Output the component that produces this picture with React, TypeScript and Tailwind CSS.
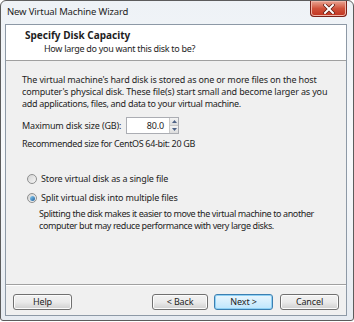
import React from 'react'

const font = { fontFamily: '"Noto Sans", "Open Sans", sans-serif' }

function WinButton({ label, primary }: { label: string; primary?: boolean }) {
  return (
    <div
      className={
        'h-[16px] rounded-[3px] border flex items-center justify-center text-[9px] text-[#1e1e1e] ' +
        (primary
          ? 'border-[#3c7fb1] bg-gradient-to-b from-[#eaf6fd] to-[#bee6fd] shadow-[inset_0_0_0_1px_#8fd1f5]'
          : 'border-[#707070] bg-gradient-to-b from-[#f2f2f2] via-[#ebebeb] to-[#cfcfcf] shadow-[inset_0_0_0_1px_#fcfcfc]')
      }
    >
      {label}
    </div>
  )
}

function Radio({ checked, label }: { checked?: boolean; label: string }) {
  return (
    <div className="flex items-center gap-[4px] h-[12px]">
      <div className="w-[10px] h-[10px] rounded-full border border-[#8e8f8f] bg-gradient-to-br from-[#d4d4d4] to-[#f6f6f6] flex items-center justify-center">
        {checked && (
          <div className="w-[5px] h-[5px] rounded-full bg-gradient-to-br from-[#8ed1f5] to-[#1b5e9c]" />
        )}
      </div>
      <span>{label}</span>
    </div>
  )
}

export default function App() {
  return (
    <div className="w-[354px] h-[322px] bg-white whitespace-nowrap" style={font}>
      <div className="w-[354px] h-[321px] rounded-t-[6px] rounded-b-[3px] border border-[#5c5c5c] bg-gradient-to-b from-[#eef2f6] via-[#f7f9fb] to-[#e6ebf1] flex flex-col">
        {/* Title bar */}
        <div className="h-[23px] flex justify-between">
          <span className="pl-[6px] pt-[4px] text-[9.5px] tracking-[-0.15px] text-[#1e1e1e]">New Virtual Machine Wizard</span>
          <div className="mr-[6px] w-[37px] h-[16px] rounded-b-[4px] border border-t-0 border-[#7a2018] bg-gradient-to-b from-[#e8a493] via-[#d0523b] to-[#c0321e] shadow-[inset_0_0_0_1px_#f0b4a6] flex items-center justify-center">
            <svg width="12" height="10" viewBox="0 0 12 10">
              <path d="M2 1 L10 9 M10 1 L2 9" stroke="#5a1a10" strokeWidth="3.4" strokeLinecap="square" />
              <path d="M2 1 L10 9 M10 1 L2 9" stroke="#ffffff" strokeWidth="2" strokeLinecap="square" />
            </svg>
          </div>
        </div>

        {/* Client area */}
        <div className="ml-[4px] mr-[6px] h-[292px] border border-[#8d99a6] flex flex-col text-[9px] tracking-[-0.15px] text-[#1e1e1e]">
          <div className="h-[36px] bg-white border-b border-[#a0a0a0] flex flex-col">
            <span className="pl-[19px] pt-[4px] text-[10px] tracking-normal font-bold leading-[12px]">Specify Disk Capacity</span>
            <span className="pl-[38px] pt-[2px] tracking-[-0.3px] leading-[12px]">How large do you want this disk to be?</span>
          </div>
          <div className="flex-1 bg-[#f0f0f0] flex flex-col">
            <div className="px-[16px] pt-[13px] flex flex-col">
              <p className="leading-[12px]">
                The virtual machine's hard disk is stored as one or more files on the host
                <br />
                computer's physical disk. These file(s) start small and become larger as you
                <br />
                <span className="tracking-[-0.3px]">add applications, files, and data to your virtual machine.</span>
              </p>
              <div className="mt-[7px] flex items-center h-[17px]">
                <span className="w-[104px]">Maximum disk size (GB):</span>
                <div className="w-[53px] h-[17px] bg-white border border-[#abadb3] flex items-center">
                  <span className="flex-1 text-right pr-[5px]">80.0</span>
                  <div className="w-[9px] h-[15px] flex flex-col border-l border-[#c8c8c8]">
                    <div className="flex-1 bg-gradient-to-b from-[#f4f4f4] to-[#dcdcdc] border-b border-[#c8c8c8] flex items-center justify-center">
                      <svg width="5" height="3" viewBox="0 0 5 3"><path d="M0 3 L2.5 0 L5 3Z" fill="#4d6185" /></svg>
                    </div>
                    <div className="flex-1 bg-gradient-to-b from-[#f4f4f4] to-[#dcdcdc] flex items-center justify-center">
                      <svg width="5" height="3" viewBox="0 0 5 3"><path d="M0 0 L2.5 3 L5 0Z" fill="#4d6185" /></svg>
                    </div>
                  </div>
                </div>
              </div>
              <p className="mt-[4px] leading-[12px] tracking-[-0.35px]">Recommended size for CentOS 64-bit: 20 GB</p>
              <div className="mt-[23px] pl-[5px] flex flex-col gap-[7px]">
                <Radio label="Store virtual disk as a single file" />
                <Radio checked label="Split virtual disk into multiple files" />
              </div>
              <p className="mt-[4px] pl-[17px] leading-[12px] tracking-[-0.4px]">
                Splitting the disk makes it easier to move the virtual machine to another
                <br />
                computer but may reduce performance with very large disks.
              </p>
            </div>
            <div className="flex-1" />
            <div className="h-[31px] border-t border-[#a0a0a0] shadow-[inset_0_1px_0_#ffffff] flex items-start pt-[9px] px-[7px]">
              <div className="w-[59px]"><WinButton label="Help" /></div>
              <div className="flex-1" />
              <div className="w-[56px]"><WinButton label="< Back" /></div>
              <div className="w-[59px] ml-[6px]"><WinButton label="Next >" primary /></div>
              <div className="w-[59px] ml-[7px]"><WinButton label="Cancel" /></div>
            </div>
          </div>
        </div>
      </div>
    </div>
  )
}
